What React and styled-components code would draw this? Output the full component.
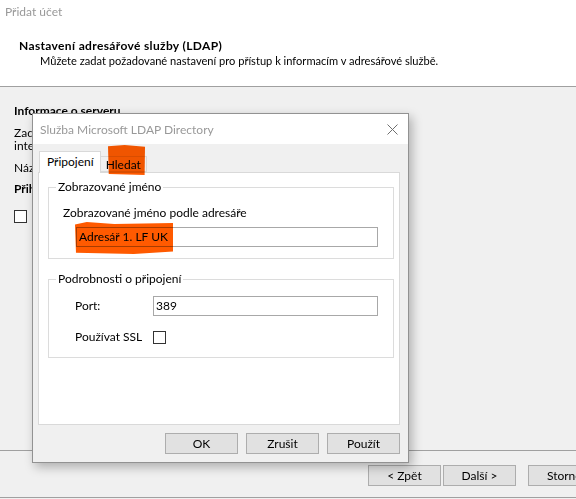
import React from "react";
import styled, { createGlobalStyle } from "styled-components";

const GlobalStyle = createGlobalStyle`
  html, body {
    margin: 0;
    padding: 0;
    background: #f0f0f0;
  }
  body {
    font-family: Lato, "Noto Sans", sans-serif;
    font-size: 12px;
    color: #000;
  }
  * {
    box-sizing: border-box;
  }
`;

const Wizard = styled.div`
  position: relative;
  width: 576px;
  height: 499px;
  overflow: hidden;
  display: flex;
  flex-direction: column;
  background: #f0f0f0;
`;

const Header = styled.header`
  height: 87px;
  background: #fff;
  border-bottom: 1px solid #a0a0a0;
  padding: 4px 0 0 5px;
`;

const WindowTitle = styled.div`
  line-height: 16px;
  color: #999;
`;

const PageTitle = styled.div`
  margin-top: 18px;
  padding-left: 14px;
  line-height: 15px;
  font-weight: 700;
  letter-spacing: 0.35px;
`;

const PageSubtitle = styled.div`
  padding-left: 35px;
  line-height: 15px;
  font-size: 11.1px;
`;

const Body = styled.main`
  flex: 1;
  padding: 16px 14px 0;
  white-space: nowrap;
`;

const SectionTitle = styled.div`
  line-height: 16px;
  font-weight: 700;
  margin-top: ${(p) => p.$gap || 0}px;
`;

const Text = styled.div`
  line-height: ${(p) => p.$lh || 16}px;
  margin-top: ${(p) => p.$gap || 0}px;
`;

const CheckRow = styled.label`
  display: flex;
  align-items: center;
  gap: 6px;
  margin-top: ${(p) => p.$gap || 0}px;
  line-height: 16px;
`;

const Check = styled.span`
  display: inline-block;
  width: 13px;
  height: 13px;
  border: 1px solid #333;
  background: #fff;
  flex: none;
`;

const Footer = styled.footer`
  height: 48px;
  margin-bottom: 1px;
  border-top: 1px solid #a0a0a0;
  border-bottom: 1px solid #a0a0a0;
  padding: 14px 0 0 368px;
  display: flex;
  align-items: flex-start;
`;

const Button = styled.button`
  flex: none;
  width: 73px;
  height: 21px;
  margin-left: ${(p) => p.$gap || 0}px;
  padding: 0;
  border: 1px solid #adadad;
  background: #e1e1e1;
  font: inherit;
  color: #000;
  line-height: 18px;
`;

const Dialog = styled.section`
  position: absolute;
  left: 32px;
  top: 113px;
  width: 377px;
  height: 350px;
  border: 1px solid #929292;
  background: #f0f0f0;
  box-shadow: 3px 4px 10px rgba(0, 0, 0, 0.28);
  display: flex;
  flex-direction: column;
`;

const TitleBar = styled.div`
  height: 30px;
  background: #fff;
  display: flex;
  align-items: center;
  justify-content: space-between;
  padding: 1px 10px 0 7px;
  color: #999;
`;

const DialogBody = styled.div`
  padding: 7px 8px 0 5px;
`;

const TabList = styled.div`
  display: flex;
  align-items: flex-end;
  height: 21px;
  padding-left: 1px;
`;

const Tab = styled.div`
  height: ${(p) => (p.$active ? 22 : 16)}px;
  margin-bottom: ${(p) => (p.$active ? -1 : 0)}px;
  padding: ${(p) => (p.$active ? "2px 6px 0 7px" : "0 5px 0 5px")};
  border: 1px solid #d9d9d9;
  border-bottom: ${(p) => (p.$active ? "none" : "1px solid #d9d9d9")};
  border-left: ${(p) => (p.$active ? "1px solid #d9d9d9" : "none")};
  background: ${(p) => (p.$active ? "#fff" : "#f0f0f0")};
  line-height: 16px;
  position: relative;
  z-index: ${(p) => (p.$active ? 1 : 0)};
`;

const Panel = styled.div`
  height: 253px;
  border: 1px solid #d9d9d9;
  background: #fff;
  padding: 0 5px 0 9px;
`;

const Group = styled.fieldset`
  margin: ${(p) => p.$gap || 0}px 0 0;
  padding: 0 0 ${(p) => p.$pb || 0}px 0;
  border: 1px solid #dcdcdc;
  min-width: 0;
`;

const Legend = styled.legend`
  margin-left: 7px;
  padding: 0 2px;
  line-height: 16px;
`;

const GroupLabel = styled.div`
  line-height: 16px;
  margin: 10px 0 0 14px;
`;

const Field = styled.div`
  height: 20px;
  border: 1px solid #a8a8a8;
  background: #fff;
  padding: 0 2px;
  line-height: 18px;
  width: ${(p) => p.$w}px;
  margin: ${(p) => p.$m || 0};
`;

const FormRow = styled.div`
  display: flex;
  align-items: center;
  padding-left: 26px;
  margin-top: ${(p) => p.$gap || 0}px;
  min-height: 16px;
`;

const RowLabel = styled.div`
  width: 78px;
  line-height: 16px;
`;

const DialogButtons = styled.div`
  display: flex;
  justify-content: flex-end;
  gap: 8px;
  margin-top: 8px;
`;

const Marker = styled.div`
  position: absolute;
  background: #ff5a00;
  mix-blend-mode: multiply;
  pointer-events: none;
`;

const TabMarker = styled(Marker)`
  left: 108px;
  top: 145px;
  width: 37px;
  height: 30px;
  clip-path: polygon(0 4%, 45% 0, 100% 6%, 99% 100%, 2% 97%);
`;

const FieldMarker = styled(Marker)`
  left: 75px;
  top: 222px;
  width: 98px;
  height: 32px;
  clip-path: polygon(0 8%, 12% 0, 40% 6%, 100% 3%, 100% 92%, 60% 100%, 1% 96%);
`;

function CloseIcon() {
  return (
    <svg width="11" height="11" viewBox="0 0 11 11">
      <path d="M0.5 0.5 L10.5 10.5 M10.5 0.5 L0.5 10.5" stroke="#6f6f6f" strokeWidth="1" fill="none" />
    </svg>
  );
}

export default function App() {
  return (
    <>
      <GlobalStyle />
      <Wizard>
        <Header>
          <WindowTitle>Přidat účet</WindowTitle>
          <PageTitle>Nastavení adresářové služby (LDAP)</PageTitle>
          <PageSubtitle>
            Můžete zadat požadované nastavení pro přístup k informacím v adresářové službě.
          </PageSubtitle>
        </Header>

        <Body>
          <SectionTitle>Informace o serveru</SectionTitle>
          <Text $lh={13} $gap={7}>
            Zadejte název adresářového serveru, který vám poskytl poskytovatel
          </Text>
          <Text $lh={13}>internetových služeb nebo správce systému.</Text>
          <Text $gap={8}>Název serveru:</Text>
          <SectionTitle $gap={5}>Přihlašovací údaje</SectionTitle>
          <CheckRow $gap={11}>
            <Check />
            Tento server vyžaduje přihlášení
          </CheckRow>
        </Body>

        <Footer>
          <Button>&lt; Zpět</Button>
          <Button $gap={2}>Další &gt;</Button>
          <Button $gap={12}>Storno</Button>
        </Footer>

        <Dialog>
          <TitleBar>
            <span>Služba Microsoft LDAP Directory</span>
            <CloseIcon />
          </TitleBar>
          <DialogBody>
            <TabList>
              <Tab $active>Připojení</Tab>
              <Tab>Hledat</Tab>
            </TabList>
            <Panel>
              <Group $gap={6} $pb={11}>
                <Legend>Zobrazované jméno</Legend>
                <GroupLabel>Zobrazované jméno podle adresáře</GroupLabel>
                <Field $w={302} $m="6px 0 0 27px">Adresář 1. LF UK</Field>
              </Group>
              <Group $gap={12} $pb={12}>
                <Legend>Podrobnosti o připojení</Legend>
                <FormRow $gap={9}>
                  <RowLabel>Port:</RowLabel>
                  <Field $w={225}>389</Field>
                </FormRow>
                <FormRow $gap={13}>
                  <RowLabel>Používat SSL</RowLabel>
                  <Check />
                </FormRow>
              </Group>
            </Panel>
            <DialogButtons>
              <Button>OK</Button>
              <Button>Zrušit</Button>
              <Button>Použít</Button>
            </DialogButtons>
          </DialogBody>
        </Dialog>

        <TabMarker />
        <FieldMarker />
      </Wizard>
    </>
  );
}
